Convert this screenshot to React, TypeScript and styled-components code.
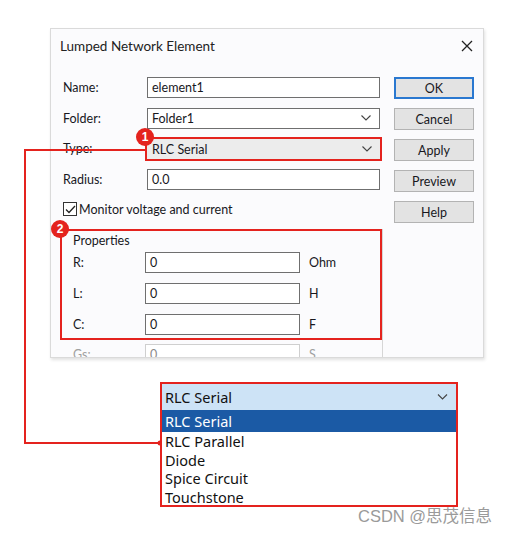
import styled, { createGlobalStyle } from 'styled-components'

const Global = createGlobalStyle`
  body { margin: 0; background: #fff; }
  * { box-sizing: border-box; }
`

const RED = '#e4231e'

const Canvas = styled.div`
  position: relative;
  width: 510px;
  height: 533px;
  padding: 28px 0 0 50px;
  font-family: Lato, 'Noto Sans', sans-serif;
  color: #18181e;
  overflow: hidden;
`

const Window = styled.section`
  width: 434px;
  height: 330px;
  background: #fbfbfd;
  border: 1px solid #dadada;
  box-shadow: 1px 2px 3px rgba(0, 0, 0, 0.12);
  overflow: hidden;
  display: flex;
  flex-direction: column;
`

const TitleBar = styled.header`
  height: 34px;
  flex: none;
  display: flex;
  align-items: center;
  justify-content: space-between;
  padding: 0 10px 0 9px;
  font-size: 13.5px;
  color: #222;
`

const Body = styled.div`
  display: flex;
  padding: 14px 0 0 12px;
  gap: 11px;
`

const Form = styled.div`
  width: 320px;
  display: flex;
  flex-direction: column;
`

const Row = styled.div`
  display: grid;
  grid-template-columns: 84px 233px;
  align-items: center;
  height: 21px;
  margin-bottom: 9.5px;
  font-size: 12.5px;
`

const Label = styled.span<{ $dim?: boolean }>`
  font-size: 12.5px;
  color: ${(p) => (p.$dim ? '#a0a0a0' : '#18181e')};
`

const Field = styled.div<{ $grey?: boolean; $mark?: boolean; $dim?: boolean }>`
  height: 21px;
  display: flex;
  align-items: center;
  justify-content: space-between;
  padding: 0 8px 0 4px;
  font-size: 12.5px;
  background: ${(p) => (p.$grey ? '#ececec' : '#fff')};
  border: 1px solid ${(p) => (p.$dim ? '#cfcfcf' : '#6f6f6f')};
  color: ${(p) => (p.$dim ? '#8a8a8a' : '#18181e')};
  ${(p) =>
    p.$mark &&
    `border: 2px solid ${RED}; height: 24px; margin: -1px -2px -2px -2px; padding-left: 5px;`}
`

const Check = styled.div`
  display: flex;
  align-items: center;
  gap: 2px;
  height: 16px;
  margin: 2px 0 0 0;
  font-size: 12.5px;
`

const Box = styled.span`
  width: 14px;
  height: 14px;
  border: 1px solid #333;
  background: #fff;
  display: flex;
  align-items: center;
  justify-content: center;
`

const Group = styled.div`
  margin: 12px 0 0 -3px;
  width: 323px;
  border-right: 1px solid #d6d6d6;
`

const Marked = styled.div`
  border: 2px solid ${RED};
  padding: 0 0 3px 11px;
`

const GroupTitle = styled.div`
  font-size: 12.5px;
  height: 20px;
  line-height: 20px;
  margin-bottom: 1px;
`

const PropRow = styled.div<{ $last?: boolean }>`
  display: grid;
  grid-template-columns: 72px 155px auto;
  align-items: center;
  height: 21px;
  margin-bottom: ${(p) => (p.$last ? '0' : '10px')};
  font-size: 12.5px;
`

const Unit = styled.span<{ $dim?: boolean }>`
  padding-left: 9px;
  color: ${(p) => (p.$dim ? '#a0a0a0' : '#18181e')};
`

const Plain = styled.div`
  padding: 4px 0 0 13px;
`

const Buttons = styled.div`
  display: flex;
  flex-direction: column;
  gap: 9px;
`

const Button = styled.button<{ $primary?: boolean }>`
  width: 80px;
  height: 22px;
  font-family: inherit;
  font-size: 12.5px;
  color: #18181e;
  background: #e3e3e3;
  border: ${(p) => (p.$primary ? '2px solid #2a78d0' : '1px solid #b3b3b3')};
  padding: 0;
`

const Badge = styled.span<{ $x: number; $y: number }>`
  position: absolute;
  left: ${(p) => p.$x - 9}px;
  top: ${(p) => p.$y - 9}px;
  width: 18px;
  height: 18px;
  border-radius: 50%;
  background: ${RED};
  color: #fff;
  font-family: 'Liberation Sans', Arial, sans-serif;
  font-weight: bold;
  font-size: 12px;
  display: flex;
  align-items: center;
  justify-content: center;
`

const Leader = styled.svg`
  position: absolute;
  left: 0;
  top: 0;
  pointer-events: none;
`

const Popup = styled.div`
  position: absolute;
  left: 160px;
  top: 382px;
  width: 298px;
  height: 125px;
  border: 2px solid ${RED};
  background: #fff;
  font-family: 'Noto Sans', 'Open Sans', sans-serif;
  font-size: 14.5px;
  color: #111;
`

const PopupHead = styled.div`
  height: 26px;
  background: #cde3f6;
  display: flex;
  align-items: center;
  justify-content: space-between;
  padding: 0 8px 0 3px;
`

const Option = styled.div<{ $on?: boolean }>`
  height: ${(p) => (p.$on ? '22px' : '18.5px')};
  line-height: ${(p) => (p.$on ? '22px' : '18.5px')};
  padding-left: 3px;
  background: ${(p) => (p.$on ? '#1b5aa5' : 'transparent')};
  color: ${(p) => (p.$on ? '#fff' : '#111')};
`

const Mark = styled.div`
  position: absolute;
  left: 358px;
  top: 503px;
  font-family: 'Liberation Sans', 'Noto Sans CJK SC', sans-serif;
  font-size: 16.5px;
  color: #9a9a9a;
`

function Chevron({ w = 10 }: { w?: number }) {
  return (
    <svg width={w} height={6} viewBox="0 0 10 6">
      <polyline points="0.5,0.5 5,5 9.5,0.5" fill="none" stroke="#444" strokeWidth="1.1" />
    </svg>
  )
}

const options = ['RLC Serial', 'RLC Parallel', 'Diode', 'Spice Circuit', 'Touchstone']

const props = [
  { k: 'R:', u: 'Ohm' },
  { k: 'L:', u: 'H' },
  { k: 'C:', u: 'F' },
]

export default function App() {
  return (
    <Canvas>
      <Global />
      <Window>
        <TitleBar>
          <span>Lumped Network Element</span>
          <svg width="12" height="12" viewBox="0 0 12 12">
            <path d="M1 1 L11 11 M11 1 L1 11" stroke="#222" strokeWidth="1.3" />
          </svg>
        </TitleBar>
        <Body>
          <Form>
            <Row>
              <Label>Name:</Label>
              <Field>element1</Field>
            </Row>
            <Row>
              <Label>Folder:</Label>
              <Field>
                Folder1
                <Chevron />
              </Field>
            </Row>
            <Row>
              <Label>Type:</Label>
              <Field $grey $mark>
                RLC Serial
                <Chevron />
              </Field>
            </Row>
            <Row>
              <Label>Radius:</Label>
              <Field>0.0</Field>
            </Row>
            <Check>
              <Box>
                <svg width="11" height="9" viewBox="0 0 11 9">
                  <polyline points="1,4.5 4,7.5 10,1" fill="none" stroke="#222" strokeWidth="1.3" />
                </svg>
              </Box>
              Monitor voltage and current
            </Check>
            <Group>
              <Marked>
                <GroupTitle>Properties</GroupTitle>
                {props.map((p, i) => (
                  <PropRow key={p.k} $last={i === props.length - 1}>
                    <Label>{p.k}</Label>
                    <Field>0</Field>
                    <Unit>{p.u}</Unit>
                  </PropRow>
                ))}
              </Marked>
              <Plain>
                <PropRow>
                  <Label $dim>Gs:</Label>
                  <Field $dim>0</Field>
                  <Unit $dim>S</Unit>
                </PropRow>
              </Plain>
            </Group>
          </Form>
          <Buttons>
            <Button $primary>OK</Button>
            <Button>Cancel</Button>
            <Button>Apply</Button>
            <Button>Preview</Button>
            <Button>Help</Button>
          </Buttons>
        </Body>
      </Window>

      <Leader width="510" height="533">
        <polyline points="145,150 25,150 25,443 160,443" fill="none" stroke={RED} strokeWidth="2" />
        <circle cx="160" cy="443" r="2.5" fill={RED} />
      </Leader>
      <Badge $x={145} $y={137}>1</Badge>
      <Badge $x={60} $y={229}>2</Badge>

      <Popup>
        <PopupHead>
          RLC Serial
          <Chevron w={11} />
        </PopupHead>
        {options.map((o, i) => (
          <Option key={o} $on={i === 0}>
            {o}
          </Option>
        ))}
      </Popup>
      <Mark>CSDN @思茂信息</Mark>
    </Canvas>
  )
}
